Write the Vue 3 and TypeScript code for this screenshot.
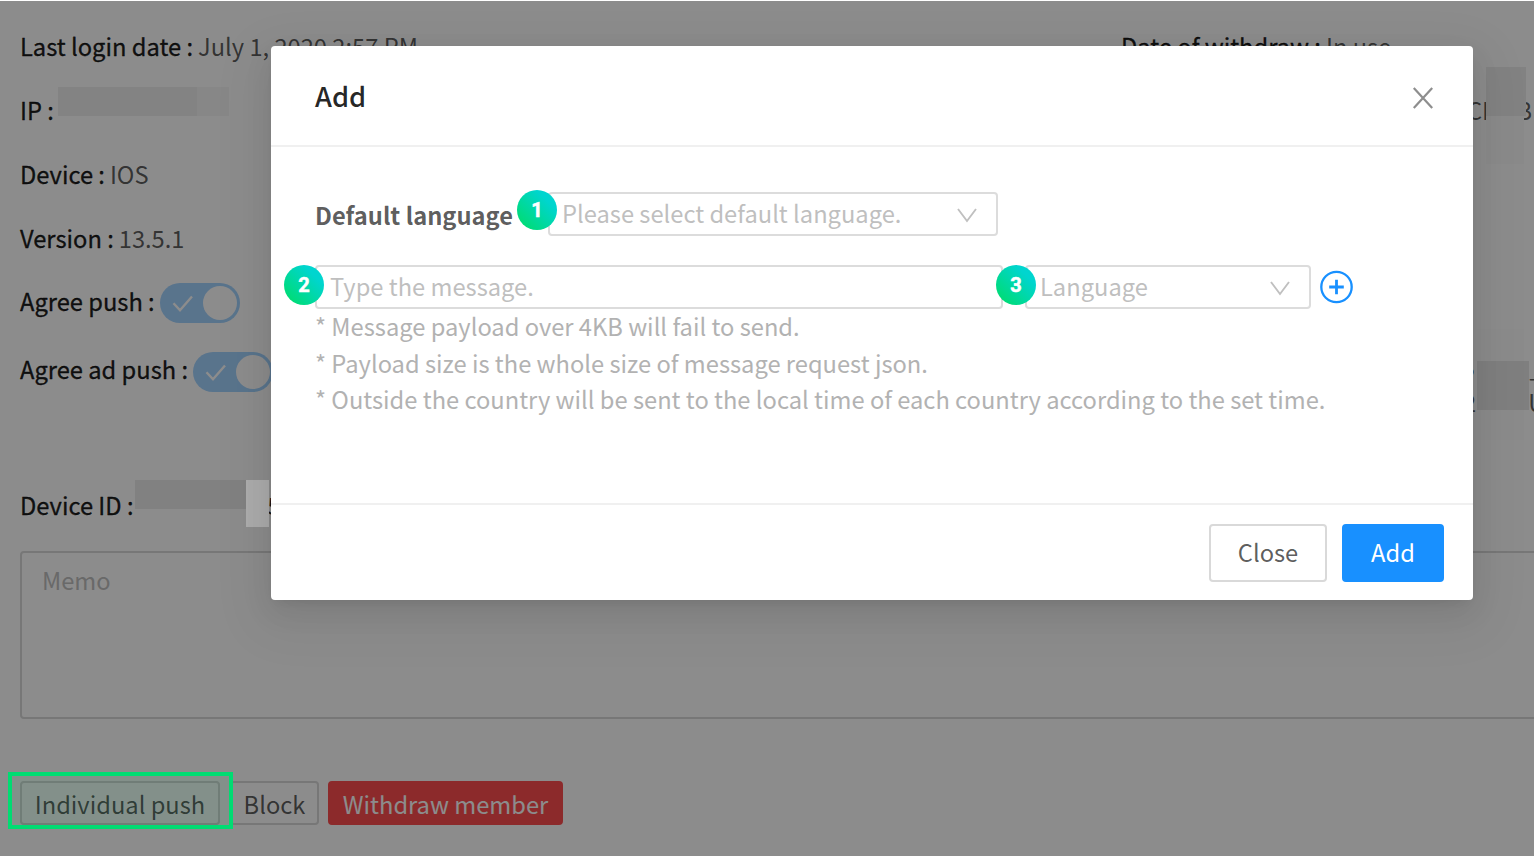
<script setup lang="ts">
interface Row {
  label: string
  value?: string
  toggle?: boolean
  kind: string
}

interface Mark {
  n: number
  kind: string
}

const rows: Row[] = [
  { label: 'Last login date :', value: 'July 1, 2020 2:57 PM', kind: 'plain' },
  { label: 'IP :', kind: 'plain' },
  { label: 'Device :', value: 'IOS', kind: 'plain' },
  { label: 'Version :', value: '13.5.1', kind: 'plain' },
  { label: 'Agree push :', toggle: true, kind: 'push' },
  { label: 'Agree ad push :', toggle: true, kind: 'adpush' },
]

const notes: string[] = [
  '* Message payload over 4KB will fail to send.',
  '* Payload size is the whole size of message request json.',
  '* Outside the country will be sent to the local time of each country according to the set time.',
]

const marks: Mark[] = [
  { n: 1, kind: 'mark-default' },
  { n: 2, kind: 'mark-message' },
  { n: 3, kind: 'mark-language' },
]

const patches: string[] = ['p1', 'p2', 'p3', 'p5', 'p6', 'p7', 'p8', 'p9']
</script>

<template>
  <div class="screen">
    <main class="page">
      <section class="details">
        <div class="column">
          <div v-for="row in rows" :key="row.label" class="row" :class="row.kind">
            <span class="label">{{ row.label }}</span>
            <span v-if="row.value" class="value">{{ row.value }}</span>
            <span v-if="row.toggle" class="switch">
              <svg class="check" width="22" height="18" viewBox="0 0 22 18">
                <path d="M1.5 8.2 L8 15.2 L20 1.5" fill="none" stroke="#fff" stroke-width="2.4" />
              </svg>
              <i class="knob"></i>
            </span>
          </div>
        </div>
        <div class="column second">
          <div class="row plain">
            <span class="label">Date of withdraw :</span>
            <span class="value">In use</span>
          </div>
          <div class="row plain ident"><span>CD</span><span>B</span></div>
          <div class="token">
            <div class="token-line"><span>B</span><span>_</span></div>
            <div class="token-line lower"><span>2</span><span>U</span></div>
          </div>
        </div>
      </section>
      <div class="row device-id"><span class="label">Device ID :</span><span class="tail">5</span></div>
      <div class="memo">Memo</div>
      <div class="actions">
        <button class="btn push-btn">Individual push</button>
        <button class="btn block-btn">Block</button>
        <button class="btn danger">Withdraw member</button>
      </div>
    </main>

    <div class="mask"></div>
    <i v-for="p in patches" :key="p" class="patch" :class="p"></i>
    <div class="highlight"></div>

    <div class="modal">
      <header class="modal-head">
        <span>Add</span>
        <svg width="22" height="22" viewBox="0 0 22 22">
          <path d="M1.8 1 L20.2 21 M20.2 1 L1.8 21" fill="none" stroke="#8e8e8e" stroke-width="2.2" />
        </svg>
      </header>
      <div class="modal-body">
        <div class="default-line">
          <b>Default language</b>
          <div class="field default-select">
            <span>Please select default language.</span>
            <svg width="20" height="15" viewBox="0 0 20 15">
              <path d="M1 1 L10 13 L19 1" fill="none" stroke="#c0c0c0" stroke-width="1.9" />
            </svg>
          </div>
        </div>
        <div class="message-line">
          <div class="field message"><span>Type the message.</span></div>
          <div class="field language">
            <span>Language</span>
            <svg width="20" height="15" viewBox="0 0 20 15">
              <path d="M1 1 L10 13 L19 1" fill="none" stroke="#c0c0c0" stroke-width="1.9" />
            </svg>
          </div>
          <svg class="plus" width="34" height="34" viewBox="0 0 34 34">
            <circle cx="16.5" cy="17" r="15.2" fill="none" stroke="#1890ff" stroke-width="2.3" />
            <path d="M16.5 9.7 V24.3 M9.2 17 H23.8" fill="none" stroke="#1890ff" stroke-width="2.8" />
          </svg>
        </div>
        <div class="notes">
          <div v-for="note in notes" :key="note">{{ note }}</div>
        </div>
      </div>
      <footer class="modal-foot">
        <button class="foot-btn">Close</button>
        <button class="foot-btn primary">Add</button>
      </footer>
    </div>

    <span v-for="m in marks" :key="m.n" class="mark" :class="m.kind">{{ m.n }}</span>
  </div>
</template>

<style>
body {
  margin: 0;
  overflow: hidden;
}
</style>

<style scoped>
.screen {
  position: relative;
  width: 1534px;
  height: 856px;
  overflow: hidden;
  background: #fff;
  font-family: "Noto Sans CJK KR", "Noto Sans", sans-serif;
  font-size: 23.7px;
  line-height: 36px;
  color: rgba(0, 0, 0, 0.65);
  white-space: nowrap;
}
.screen * {
  box-sizing: border-box;
}
.page {
  padding: 14px 0 0 20px;
}
.details {
  display: grid;
  grid-template-columns: 1101px 413px;
  height: 421px;
}
.row {
  display: flex;
  align-items: center;
  gap: 5px;
  height: 64px;
}
.label {
  color: rgba(0, 0, 0, 0.88);
  -webkit-text-stroke: 0.35px rgba(0, 0, 0, 0.88);
}
.row.push {
  height: 62px;
}
.row.adpush {
  height: 74px;
}
.switch {
  display: flex;
  align-items: center;
  justify-content: space-between;
  width: 80px;
  height: 40px;
  margin-top: 4px;
  padding: 0 3px 0 12px;
  border-radius: 20px;
  background: #a3d3ff;
}
.adpush .switch {
  margin-top: 5px;
}
.check {
  margin-top: 2px;
}
.knob {
  width: 34px;
  height: 34px;
  border-radius: 50%;
  background: #fff;
}
.ident {
  gap: 18px;
  padding-left: 346px;
}
.token {
  margin-top: 207px;
  padding-left: 338px;
}
.token-line {
  display: flex;
  gap: 55px;
  height: 35px;
}
.token-line.lower {
  padding-left: 4px;
  gap: 52px;
}
.device-id {
  gap: 134px;
  height: 64px;
  margin-top: 38px;
}
.tail {
  color: rgba(0, 0, 0, 0.85);
}
.memo {
  width: 1560px;
  height: 168px;
  margin-top: 14px;
  padding: 9px 20px;
  border: 2px solid #d9d9d9;
  border-radius: 4px;
  color: #bfbfbf;
}
.actions {
  display: flex;
  gap: 10px;
  margin-top: 62px;
}
.btn {
  display: flex;
  align-items: center;
  justify-content: center;
  height: 44px;
  padding: 1px 0 0;
  border: 2px solid #d9d9d9;
  border-radius: 4px;
  background: #fff;
  color: rgba(0, 0, 0, 0.65);
  font: inherit;
}
.push-btn {
  width: 200px;
}
.block-btn {
  width: 89px;
  margin-right: -1px;
}
.danger {
  width: 235px;
  border-color: #ff4d4f;
  background: #ff4d4f;
  color: #fff;
}
.mask {
  position: absolute;
  inset: 1px 0 0 0;
  background: rgba(0, 0, 0, 0.45);
}
.patch {
  position: absolute;
}
.p1 { left: 58px; top: 87px; width: 139px; height: 29px; background: #838383; }
.p2 { left: 197px; top: 87px; width: 32px; height: 29px; background: #878787; }
.p3 { left: 135px; top: 480px; width: 111px; height: 29px; background: #818181; }
.p5 { left: 246px; top: 480px; width: 23px; height: 47px; background: #acacac; }
.p6 { left: 1486px; top: 116px; width: 38px; height: 48px; background: #8a8a8a; }
.p7 { left: 1486px; top: 67px; width: 40px; height: 49px; background: #828282; }
.p8 { left: 1477px; top: 329px; width: 47px; height: 111px; background: #8b8b8b; }
.p9 { left: 1477px; top: 361px; width: 52px; height: 49px; background: #7f7f7f; }
.highlight {
  position: absolute;
  left: 8px;
  top: 772px;
  width: 225px;
  height: 57px;
  border: 4px solid #00dc72;
  background: rgba(0, 220, 114, 0.06);
}
.modal {
  position: absolute;
  left: 271px;
  top: 46px;
  display: flex;
  flex-direction: column;
  width: 1202px;
  height: 554px;
  border-radius: 4px;
  background: #fff;
  box-shadow: 0 5px 11px -7px rgba(0, 0, 0, 0.12), 0 11px 29px rgba(0, 0, 0, 0.08),
    0 16px 51px 15px rgba(0, 0, 0, 0.05);
}
.modal-head {
  display: flex;
  align-items: center;
  justify-content: space-between;
  height: 101px;
  padding: 4px 39px 0 44px;
  border-bottom: 2px solid #f0f0f0;
  color: rgba(0, 0, 0, 0.85);
  font-size: 27.2px;
  font-weight: 500;
}
.modal-head span {
  padding-bottom: 6px;
}
.modal-body {
  flex: 1;
  padding: 45px 44px 0;
}
.default-line {
  display: flex;
  align-items: center;
  height: 44px;
}
.default-line b {
  width: 233px;
  padding-top: 2px;
}
.field {
  display: flex;
  align-items: center;
  justify-content: space-between;
  height: 44px;
  padding: 0 19px 0 12px;
  border: 2px solid #dcdcdc;
  border-radius: 4px;
  background: #fff;
  color: #bfbfbf;
}
.field span {
  padding-bottom: 2px;
}
.field svg {
  margin-top: 3px;
}
.default-select {
  width: 450px;
}
.message-line {
  display: flex;
  align-items: center;
  height: 44px;
  margin-top: 29px;
}
.message {
  width: 688px;
}
.language {
  width: 286px;
  margin-left: 22px;
}
.message-line .field {
  padding-left: 13px;
}
.plus {
  margin-left: 9px;
}
.notes {
  margin-top: -1px;
  color: #b2b2b2;
  line-height: 36.5px;
}
.modal-foot {
  display: flex;
  justify-content: flex-end;
  gap: 15px;
  height: 97px;
  padding: 19px 29px 0;
  border-top: 2px solid #f0f0f0;
}
.foot-btn {
  width: 118px;
  height: 58px;
  padding: 0 0 3px;
  border: 2px solid #d9d9d9;
  border-radius: 4px;
  background: #fff;
  color: rgba(0, 0, 0, 0.65);
  font: inherit;
}
.foot-btn.primary {
  width: 102px;
  border-color: #1890ff;
  background: #1890ff;
  color: #fff;
}
.mark {
  position: absolute;
  width: 40px;
  height: 40px;
  border-radius: 50%;
  background: linear-gradient(45deg, #00dc72 10%, #00d5cf 75%);
  color: #fff;
  font: 700 20px/40px Roboto, "Liberation Sans", sans-serif;
  -webkit-text-stroke: 0.5px #fff;
  text-align: center;
}
.mark-default { left: 517px; top: 190px; }
.mark-message { left: 284px; top: 265px; }
.mark-language { left: 996px; top: 265px; }
</style>
